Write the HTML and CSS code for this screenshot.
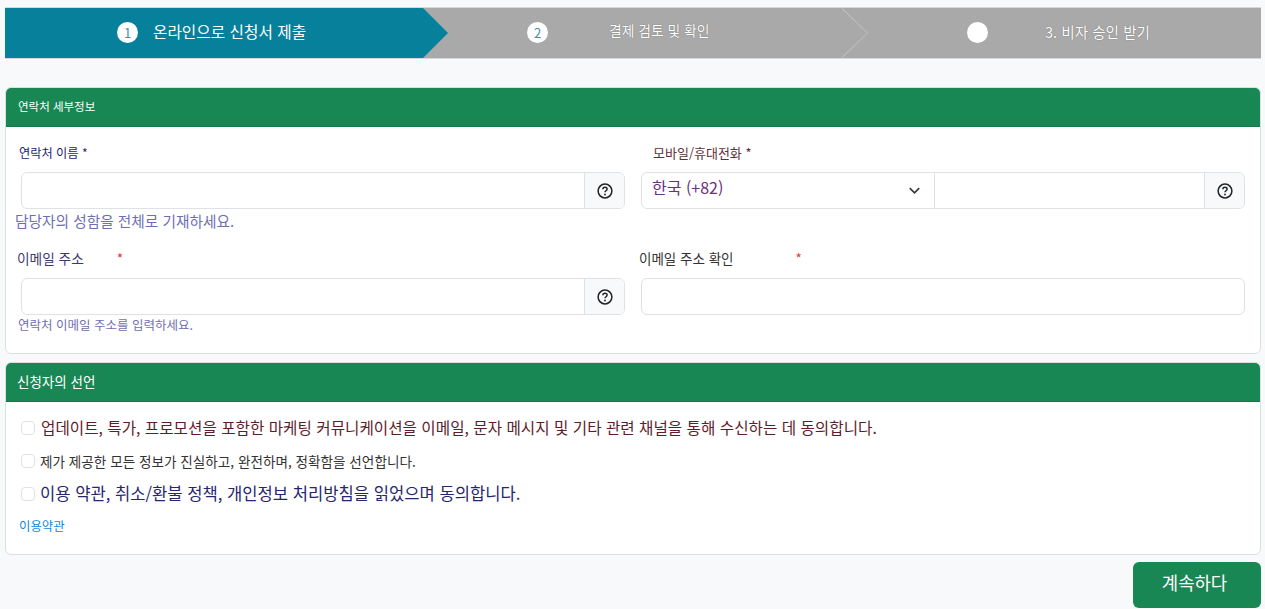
FILE: index.html
```html
<!DOCTYPE html>
<html lang="ko">
<head>
<meta charset="utf-8">
<title>비자 신청</title>
<link rel="stylesheet" href="styles.css">
</head>
<body>
<main class="page">
  <ol class="stepper">
    <li class="step step-active step-one"><span class="step-num">1</span><span class="step-text">온라인으로 신청서 제출</span></li>
    <li class="step step-two"><span class="step-num">2</span><span class="step-text">결제 검토 및 확인</span></li>
    <li class="step step-three"><span class="step-num"></span><span class="step-text">3. 비자 승인 받기</span></li>
  </ol>

  <section class="card card-contact">
    <h2 class="card-head">연락처 세부정보</h2>
    <div class="card-body form-grid">
      <div class="field">
        <label class="label label-name">연락처 이름 *</label>
        <div class="group">
          <input class="control" type="text">
          <span class="addon"><svg class="help-icon" viewBox="0 0 16 16"><circle cx="8" cy="8" r="6.9"/><path d="M5.9 6.2C5.9 5 6.8 4.3 8 4.3s2.1.8 2.1 1.8c0 1.7-2.1 1.6-2.1 3.2"/><circle class="dot" cx="8" cy="11.5" r=".9"/></svg></span>
        </div>
        <p class="help help-name">담당자의 성함을 전체로 기재하세요.</p>
      </div>
      <div class="field">
        <label class="label label-mobile">모바일/휴대전화 *</label>
        <div class="group">
          <div class="select-wrap">
            <select class="country"><option>한국 (+82)</option></select>
            <svg class="chevron" viewBox="0 0 16 16"><path d="M3 5.5l5 5 5-5"/></svg>
          </div>
          <input class="control" type="tel">
          <span class="addon"><svg class="help-icon" viewBox="0 0 16 16"><circle cx="8" cy="8" r="6.9"/><path d="M5.9 6.2C5.9 5 6.8 4.3 8 4.3s2.1.8 2.1 1.8c0 1.7-2.1 1.6-2.1 3.2"/><circle class="dot" cx="8" cy="11.5" r=".9"/></svg></span>
        </div>
      </div>
      <div class="field">
        <label class="label label-email">이메일 주소<span class="req req-email">*</span></label>
        <div class="group">
          <input class="control" type="email">
          <span class="addon"><svg class="help-icon" viewBox="0 0 16 16"><circle cx="8" cy="8" r="6.9"/><path d="M5.9 6.2C5.9 5 6.8 4.3 8 4.3s2.1.8 2.1 1.8c0 1.7-2.1 1.6-2.1 3.2"/><circle class="dot" cx="8" cy="11.5" r=".9"/></svg></span>
        </div>
        <p class="help help-email">연락처 이메일 주소를 입력하세요.</p>
      </div>
      <div class="field">
        <label class="label label-confirm">이메일 주소 확인<span class="req req-confirm">*</span></label>
        <div class="group">
          <input class="control" type="email">
        </div>
      </div>
    </div>
  </section>

  <section class="card card-declare">
    <h2 class="card-head">신청자의 선언</h2>
    <div class="card-body checks">
      <label class="check check-a"><input type="checkbox"><span>업데이트, 특가, 프로모션을 포함한 마케팅 커뮤니케이션을 이메일, 문자 메시지 및 기타 관련 채널을 통해 수신하는 데 동의합니다.</span></label>
      <label class="check check-b"><input type="checkbox"><span>제가 제공한 모든 정보가 진실하고, 완전하며, 정확함을 선언합니다.</span></label>
      <label class="check check-c"><input type="checkbox"><span>이용 약관, 취소/환불 정책, 개인정보 처리방침을 읽었으며 동의합니다.</span></label>
      <a class="terms" href="#">이용약관</a>
    </div>
  </section>

  <div class="actions">
    <button class="next" type="button">계속하다</button>
  </div>
</main>
</body>
</html>
```

FILE: styles.css
```css
* { box-sizing: border-box; }

html, body {
  margin: 0;
  height: 609px;
  overflow: hidden;
  background: #f8f9fa;
  font-family: "Noto Sans CJK KR", "Noto Sans", sans-serif;
}

.page {
  padding: 7px 4px 0 5px;
}

/* stepper */
.stepper {
  display: grid;
  grid-template-columns: 418px 419px 1fr;
  height: 52px;
  margin: 0 0 28px;
  padding: 0;
  list-style: none;
  background: #a9a9a9;
  border-top: 1px solid #d8d8d8;
  border-bottom: 1px solid #d8d8d8;
}

.step {
  position: relative;
  display: flex;
  align-items: center;
  padding-bottom: 2px;
  color: #fff;
  font-size: 14px;
}

.step-text { padding-bottom: 2px; }

.step-active { background: #07809c; }

.step-active::after {
  content: "";
  position: absolute;
  z-index: 2;
  top: 0;
  left: 100%;
  width: 25px;
  height: 100%;
  background: #07809c;
  clip-path: polygon(0 0, 100% 50%, 0 100%);
}

.step-two::after {
  content: "";
  position: absolute;
  top: 0;
  left: 100%;
  width: 26px;
  height: 100%;
  background: #c9c9c9;
  clip-path: polygon(0 0, 100% 50%, 0 100%, 0 98%, 97% 50%, 0 2%);
}

.step-num {
  flex: none;
  width: 21px;
  height: 21px;
  border-radius: 50%;
  background: #fff;
  color: #4a8ea5;
  font-size: 13px;
  line-height: 21px;
  text-align: center;
}

.step-one { padding-left: 112px; }
.step-one .step-text { margin-left: 15px; font-size: 15.7px; }
.step-two { padding-left: 104px; }
.step-two .step-text { margin-left: 61px; padding-bottom: 4px; font-size: 13.8px; text-shadow: 0 0 1px #555; }
.step-three { padding-left: 125px; }
.step-three .step-text { margin-left: 57px; font-size: 14.6px; text-shadow: 0 0 1px #555; }

/* cards */
.card {
  background: #fff;
  border: 1px solid #dcdfe2;
  border-radius: 6px;
  overflow: hidden;
}

.card-declare { margin-top: 8px; }

.card-head {
  height: 39px;
  margin: 0;
  padding: 0 12px;
  background: #198754;
  border-bottom: 1px solid #16794b;
  color: #fff;
  font-size: 11.5px;
  font-weight: 400;
  line-height: 37px;
}

.card-declare .card-head { padding-left: 11px; font-size: 13.5px; }

.card-body { padding: 15px 15px 18px; }

.form-grid {
  display: grid;
  grid-template-columns: 1fr 1fr;
  column-gap: 16px;
  row-gap: 16px;
}

.label {
  display: block;
  height: 20px;
  margin-bottom: 10px;
  font-size: 12.2px;
  line-height: 20px;
}

.label-name { margin-left: -2px; color: #1b1b78; line-height: 22px; }
.label-mobile { margin-left: 12px; color: #5f2f38; font-size: 13px; line-height: 22px; }
.label-email { margin-left: -4px; color: #3a3a70; font-size: 13.7px; }
.label-confirm { margin-left: -2px; color: #333; font-size: 13.5px; }

.req { color: #dc3545; }
.req-email { margin-left: 33px; }
.req-confirm { margin-left: 62px; }

.group {
  display: flex;
  height: 37px;
  background: #fff;
  border: 1px solid #dee2e6;
  border-radius: 6px;
  overflow: hidden;
}

.control {
  flex: 1;
  min-width: 0;
  border: 0;
  outline: 0;
  background: transparent;
}

.addon {
  flex: none;
  display: flex;
  align-items: center;
  justify-content: center;
  width: 40px;
  background: #f8f9fa;
  border-left: 1px solid #dee2e6;
}

.help-icon {
  width: 16px;
  height: 16px;
  fill: none;
  stroke: #212529;
  stroke-width: 1.5;
}

.help-icon .dot { fill: #212529; stroke: none; }

.select-wrap {
  position: relative;
  flex: none;
  width: 293px;
  border-right: 1px solid #dee2e6;
}

.country {
  width: 100%;
  height: 100%;
  padding: 0 0 8px 10px;
  border: 0;
  outline: 0;
  appearance: none;
  background: transparent;
  color: #6b2f80;
  font: 400 16px "Noto Sans CJK KR", "Noto Sans", sans-serif;
}

.chevron {
  position: absolute;
  top: 10px;
  right: 12px;
  width: 15px;
  height: 15px;
  fill: none;
  stroke: #343a40;
  stroke-width: 1.8;
}

.help { margin: 0; color: #6f6fb0; }
.help-name { margin-left: -6px; font-size: 14.7px; line-height: 23px; }
.help-email { margin-left: -3px; font-size: 12.5px; line-height: 20px; }

/* declarations */
.checks { padding: 9px 15px 18px; }

.check {
  display: flex;
  align-items: center;
  height: 33px;
}

.check input {
  flex: none;
  width: 14px;
  height: 14px;
  margin: 0 6px 0 0;
  appearance: none;
  background: #fff;
  border: 1px solid #dee2e6;
  border-radius: 4px;
}

.check-a { color: #5e1c2c; font-size: 15.65px; }
.check-b { color: #333; font-size: 13.6px; }
.check-c { color: #26266e; font-size: 16.6px; }
.check-c span { padding-bottom: 2px; }
.check-b input { margin-right: 5px; }
.check-c input { margin-right: 5px; }

.terms {
  display: block;
  margin: 6px 0 0 -2px;
  color: #1188d8;
  font-size: 12.4px;
  line-height: 20px;
  text-decoration: none;
}

/* footer */
.actions {
  display: flex;
  justify-content: flex-end;
  margin-top: 7px;
}

.next {
  width: 128px;
  height: 46px;
  padding: 0 5px 6px 0;
  border: 0;
  border-radius: 6px;
  background: #198754;
  color: #fff;
  font: 400 17.8px "Noto Sans CJK KR", "Noto Sans", sans-serif;
}
```
